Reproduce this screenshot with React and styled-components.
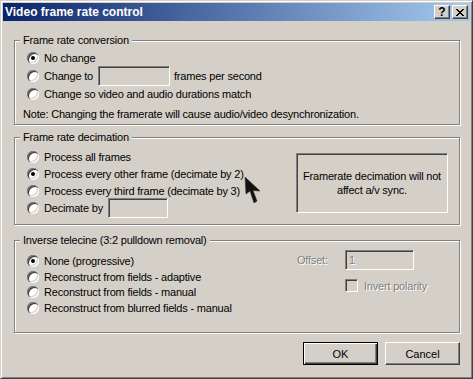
import React from "react";
import styled, { createGlobalStyle } from "styled-components";

const GlobalStyle = createGlobalStyle`
  * { box-sizing: border-box; }
  html, body { margin: 0; padding: 0; background: #d4d0c8; }
  body {
    font-family: "Liberation Sans", Arial, sans-serif;
    font-size: 11px;
    letter-spacing: -0.2px;
    color: #000;
  }
`;

const Window = styled.div`
  position: relative;
  width: 473px;
  height: 379px;
  display: flex;
  flex-direction: column;
  padding: 2px;
  background: #d4d0c8;
  border: 1px solid;
  border-color: #d4d0c8 #404040 #404040 #d4d0c8;
  box-shadow: inset 1px 1px 0 #fff, inset -1px -1px 0 #808080;
`;

const TitleBar = styled.div`
  height: 18px;
  flex: none;
  display: flex;
  align-items: center;
  padding: 0 2px;
  background: linear-gradient(to right, #0a246a, #a6caf0);
`;

const Title = styled.div`
  flex: 1;
  color: #fff;
  font-weight: bold;
  font-size: 12px;
  letter-spacing: 0;
  white-space: nowrap;
`;

const CaptionButton = styled.div`
  width: 16px;
  height: 14px;
  margin-left: ${(p) => p.$gap || 0}px;
  display: flex;
  align-items: center;
  justify-content: center;
  background: #d4d0c8;
  border: 1px solid;
  border-color: #fff #404040 #404040 #fff;
  box-shadow: inset -1px -1px 0 #808080;
  font-weight: bold;
  font-size: 12px;
  line-height: 12px;
  letter-spacing: 0;
`;

const Body = styled.div`
  flex: 1;
  display: flex;
  flex-direction: column;
  padding: 0 10px 0 11px;
`;

const Group = styled.fieldset`
  margin: ${(p) => p.$top}px 0 0;
  padding: ${(p) => p.$pt}px 0 ${(p) => p.$pb}px;
  min-width: 0;
  border: 1px solid #808080;
  box-shadow: 1px 1px 0 #fff, inset 1px 1px 0 #fff;
`;

const Legend = styled.legend`
  margin-left: 5px;
  padding: 0 3px;
  line-height: 13px;
  background: #d4d0c8;
`;

const Options = styled.div`
  display: flex;
  flex-direction: column;
  padding-left: 12px;
`;

const RadioRow = styled.label`
  display: flex;
  align-items: center;
  height: ${(p) => p.$h}px;
  white-space: nowrap;
`;

const Radio = styled.span`
  position: relative;
  flex: none;
  width: 12px;
  height: 12px;
  margin-right: 5px;
  border-radius: 50%;
  background: #fff;
  box-shadow: inset 1px 1px 0 #808080, inset 2px 2px 0 #404040,
    inset -1px -1px 0 #fff, inset -2px -2px 0 #d4d0c8;

  &::after {
    content: "";
    display: ${(p) => (p.$on ? "block" : "none")};
    position: absolute;
    left: 4px;
    top: 4px;
    width: 4px;
    height: 4px;
    border-radius: 50%;
    background: #000;
  }
`;

const FixedLabel = styled.span`
  width: ${(p) => p.$w}px;
  flex: none;
`;

const Edit = styled.div`
  width: ${(p) => p.$w}px;
  height: 20px;
  flex: none;
  padding: 2px 3px;
  line-height: 14px;
  background: #d4d0c8;
  border: 1px solid;
  border-color: #808080 #fff #fff #808080;
  box-shadow: inset 1px 1px 0 #404040;
  color: #808080;
  text-shadow: 1px 1px 0 #fff;
`;

const After = styled.span`
  margin-left: 4px;
`;

const Note = styled.div`
  margin-top: 5.5px;
  padding-left: 8px;
  line-height: 13px;
  white-space: nowrap;
`;

const Split = styled.div`
  display: flex;
  align-items: ${(p) => p.$align || "center"};
`;

const InfoBox = styled.div`
  width: 152px;
  height: 60px;
  margin: 0 11px 0 auto;
  display: flex;
  align-items: center;
  justify-content: center;
  text-align: center;
  line-height: 14px;
  border: 1px solid;
  border-color: #808080 #fff #fff #808080;
  box-shadow: inset 1px 1px 0 #404040;
`;

const Side = styled.div`
  margin: -3.25px 45px 0 auto;
  display: grid;
  grid-template-columns: 48px 69px;
  row-gap: 9px;
  align-items: center;
`;

const Disabled = styled.span`
  color: #808080;
  text-shadow: 1px 1px 0 #fff;
  white-space: nowrap;
`;

const CheckRow = styled.div`
  grid-column: 2;
  display: flex;
  align-items: center;
  gap: 6px;
`;

const CheckBox = styled.span`
  width: 13px;
  height: 13px;
  flex: none;
  background: #d4d0c8;
  border: 1px solid;
  border-color: #808080 #fff #fff #808080;
  box-shadow: inset 1px 1px 0 #404040;
`;

const ButtonRow = styled.div`
  display: flex;
  justify-content: flex-end;
  gap: 7px;
  margin-top: 9px;
`;

const Button = styled.button`
  width: 75px;
  height: 23px;
  padding: 0;
  font: inherit;
  color: #000;
  background: #d4d0c8;
  border: 1px solid;
  border-color: ${(p) => (p.$default ? "#000" : "#fff #404040 #404040 #fff")};
  box-shadow: ${(p) =>
    p.$default
      ? "inset 1px 1px 0 #fff, inset -1px -1px 0 #404040, inset -2px -2px 0 #808080"
      : "inset -1px -1px 0 #808080"};
`;

const Cursor = styled.svg`
  position: absolute;
  left: 242px;
  top: 174px;
`;

const CloseGlyph = () => (
  <svg width="8" height="7" viewBox="0 0 8 7" shapeRendering="crispEdges">
    <path
      d="M0 0h2v1h-2zM6 0h2v1h-2zM1 1h2v1h-2zM5 1h2v1h-2zM2 2h4v1h-4zM3 3h2v1h-2zM2 4h4v1h-4zM1 5h2v1h-2zM5 5h2v1h-2zM0 6h2v1h-2zM6 6h2v1h-2z"
      fill="#000"
    />
  </svg>
);

export default function App() {
  return (
    <>
      <GlobalStyle />
      <Window>
        <TitleBar>
          <Title>Video frame rate control</Title>
          <CaptionButton>?</CaptionButton>
          <CaptionButton $gap={2}>
            <CloseGlyph />
          </CaptionButton>
        </TitleBar>
        <Body>
          <Group $top={13} $pt={2} $pb={3.5}>
            <Legend>Frame rate conversion</Legend>
            <Options>
              <RadioRow $h={18}>
                <Radio $on />
                No change
              </RadioRow>
              <RadioRow $h={18}>
                <Radio />
                <FixedLabel $w={54}>Change to</FixedLabel>
                <Edit $w={72} />
                <After>frames per second</After>
              </RadioRow>
              <RadioRow $h={17}>
                <Radio />
                Change so video and audio durations match
              </RadioRow>
            </Options>
            <Note>
              Note: Changing the framerate will cause audio/video desynchronization.
            </Note>
          </Group>

          <Group $top={6} $pt={4.5} $pb={7.5}>
            <Legend>Frame rate decimation</Legend>
            <Split>
              <Options>
                <RadioRow $h={17}>
                  <Radio />
                  Process all frames
                </RadioRow>
                <RadioRow $h={17}>
                  <Radio $on />
                  Process every other frame (decimate by 2)
                </RadioRow>
                <RadioRow $h={17}>
                  <Radio />
                  Process every third frame (decimate by 3)
                </RadioRow>
                <RadioRow $h={17}>
                  <Radio />
                  <FixedLabel $w={64}>Decimate by</FixedLabel>
                  <Edit $w={60} />
                </RadioRow>
              </Options>
              <InfoBox>
                Framerate decimation will not
                <br />
                affect a/v sync.
              </InfoBox>
            </Split>
          </Group>

          <Group $top={9} $pt={6.25} $pb={16.75}>
            <Legend>Inverse telecine (3:2 pulldown removal)</Legend>
            <Split $align="flex-start">
              <Options>
                <RadioRow $h={15.5}>
                  <Radio $on />
                  None (progressive)
                </RadioRow>
                <RadioRow $h={15.5}>
                  <Radio />
                  Reconstruct from fields - adaptive
                </RadioRow>
                <RadioRow $h={15.5}>
                  <Radio />
                  Reconstruct from fields - manual
                </RadioRow>
                <RadioRow $h={15.5}>
                  <Radio />
                  Reconstruct from blurred fields - manual
                </RadioRow>
              </Options>
              <Side>
                <Disabled>Offset:</Disabled>
                <Edit $w={69}>1</Edit>
                <CheckRow>
                  <CheckBox />
                  <Disabled>Invert polarity</Disabled>
                </CheckRow>
              </Side>
            </Split>
          </Group>

          <ButtonRow>
            <Button $default>OK</Button>
            <Button>Cancel</Button>
          </ButtonRow>
        </Body>
        <Cursor width="20" height="30" viewBox="0 0 20 30">
          <polygon
            points="2,2 3,19 7,16 11,28 14,26 10,15.5 17,16"
            fill="#111"
            stroke="#333"
            strokeWidth="0.6"
            strokeLinejoin="round"
          />
        </Cursor>
      </Window>
    </>
  );
}
